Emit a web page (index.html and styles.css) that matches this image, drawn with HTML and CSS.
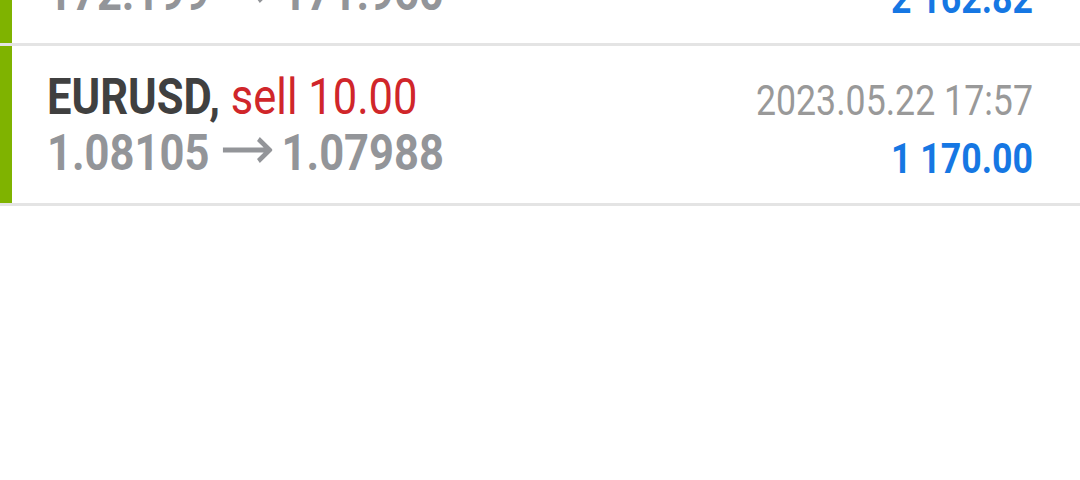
FILE: index.html
```html
<!DOCTYPE html>
<html lang="en">
<head>
    <meta charset="UTF-8">
    <meta name="viewport" content="width=device-width, initial-scale=1.0">
    <title>History</title>
    <link rel="stylesheet" href="styles.css">
</head>
<body>
    <div class="deals">
        <div class="deal">
            <div class="deal-left">
                <div class="deal-title"><span class="symbol">USDJPY,</span> <span class="type sell">sell 10.00</span></div>
                <div class="deal-prices">172.199<svg class="arrow" viewBox="0 0 57 26"><path d="M0 13H54M41 2L54 13L41 24"/></svg>171.960</div>
            </div>
            <div class="deal-right">
                <div class="deal-time">2023.05.22 16:12</div>
                <div class="deal-profit">2 162.82</div>
            </div>
        </div>
        <div class="deal">
            <div class="deal-left">
                <div class="deal-title"><span class="symbol">EURUSD,</span> <span class="type sell">sell 10.00</span></div>
                <div class="deal-prices">1.08105<svg class="arrow" viewBox="0 0 57 26"><path d="M0 13H54M41 2L54 13L41 24"/></svg>1.07988</div>
            </div>
            <div class="deal-right">
                <div class="deal-time">2023.05.22 17:57</div>
                <div class="deal-profit">1 170.00</div>
            </div>
        </div>
    </div>
</body>
</html>
```

FILE: styles.css
```css
body {
    margin: 0;
    padding: 0;
    background: #fff;
    font-family: Roboto, "Noto Sans", sans-serif;
    overflow: hidden;
}
/* список прокручен, верхняя сделка видна частично */
.deals {
    margin-top: -114px;
}
.deal {
    display: flex;
    justify-content: space-between;
    align-items: flex-start;
    height: 112px;
    padding: 23px 47px 22px 47px;
    /* зелёная полоса слева */
    box-shadow: inset 12px 0 #7fb300;
    border-bottom: 3px solid #e4e4e4;
}
.deal-left {
    transform: scaleX(0.87);
    transform-origin: left center;
    white-space: nowrap;
}
.deal-title,
.deal-prices {
    font-size: 50px;
    line-height: 56px;
}
.symbol {
    font-weight: bold;
    color: #404040;
}
.sell {
    color: #d0262a;
}
.deal-prices {
    font-weight: bold;
    color: #939599;
}
.arrow {
    width: 57px;
    height: 26px;
    margin: 0 11px 0 15px;
    vertical-align: 7px;
    fill: none;
    stroke: #939599;
    stroke-width: 5;
}
.deal-right {
    margin-top: 3px;
    text-align: right;
    transform: scaleX(0.85);
    transform-origin: right center;
    white-space: nowrap;
}
.deal-time,
.deal-profit {
    font-size: 42px;
    line-height: 58px;
}
.deal-time {
    color: #999;
}
.deal-profit {
    font-weight: bold;
    color: #1677e3;
}
```
